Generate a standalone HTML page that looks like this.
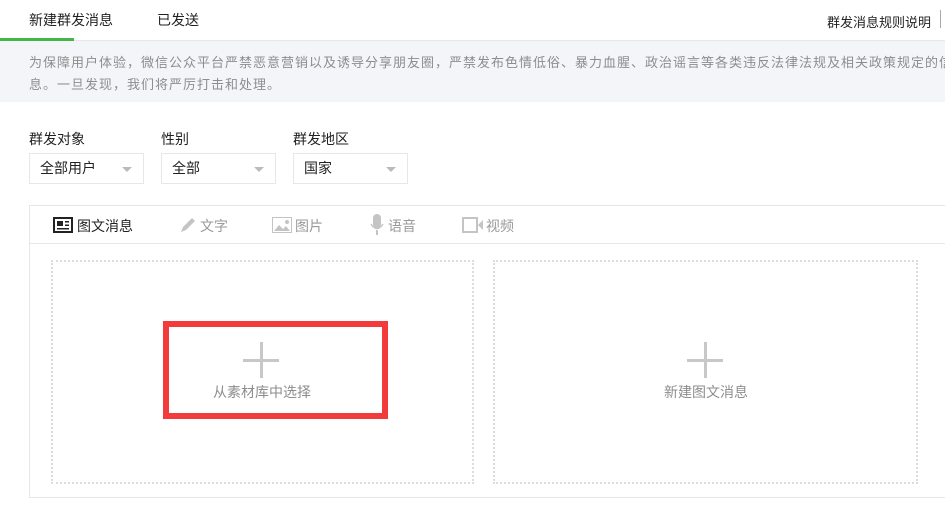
<!DOCTYPE html>
<html><head><meta charset="utf-8"><style>
body{margin:0;width:945px;height:518px;overflow:hidden;background:#fff;font-family:"Liberation Sans","Noto Sans CJK SC",sans-serif;font-size:14px;color:#353535;position:relative}
.a{position:absolute;white-space:nowrap}
.sel{position:absolute;top:153px;height:31px;border:1px solid #e4e8eb;box-sizing:border-box;width:115px;line-height:29px;padding-left:10px;font-size:14px;color:#222}
.sel:after{content:"";position:absolute;right:11px;top:13px;border:5px solid transparent;border-top:5px solid #bbb}
.card{position:absolute;top:260px;height:224px;border:2px dotted #dcdcde;box-sizing:border-box}
.plus{position:absolute;width:36px;height:36px}
.plus:before{content:"";position:absolute;left:0;top:17px;width:36px;height:3px;background:#c8c8c8}
.plus:after{content:"";position:absolute;left:17px;top:0;width:3px;height:36px;background:#c8c8c8}
.t{position:absolute;top:216px;font-size:14px;color:#9a9a9a}
</style></head><body>
<div class="a" style="left:29px;top:10px;font-size:14px;color:#222">新建群发消息</div>
<div class="a" style="left:157px;top:10px;font-size:14px;color:#222">已发送</div>
<div class="a" style="left:827px;top:12px;font-size:13px;color:#222">群发消息规则说明</div>
<div class="a" style="left:940px;top:10px;width:1px;height:18px;background:#aaa"></div>
<div class="a" style="left:0;top:40px;width:945px;height:1px;background:#e7e7eb"></div>
<div class="a" style="left:0;top:38px;width:74px;height:3px;background:#44b549"></div>
<div class="a" style="left:0;top:41px;width:945px;height:61px;background:#f4f5f9"></div>
<div class="a" style="left:29px;top:52px;font-size:13px;color:#8d8d8d;line-height:22px;letter-spacing:1px">为保障用户体验，微信公众平台严禁恶意营销以及诱导分享朋友圈，严禁发布色情低俗、暴力血腥、政治谣言等各类违反法律法规及相关政策规定的信</div>
<div class="a" style="left:29px;top:74px;font-size:13px;color:#8d8d8d;line-height:22px;letter-spacing:1px">息。一旦发现，我们将严厉打击和处理。</div>
<div class="a" style="left:29px;top:129px;font-size:14px;color:#222">群发对象</div>
<div class="a" style="left:161px;top:129px;font-size:14px;color:#222">性别</div>
<div class="a" style="left:293px;top:129px;font-size:14px;color:#222">群发地区</div>
<div class="sel" style="left:29px">全部用户</div>
<div class="sel" style="left:161px">全部</div>
<div class="sel" style="left:293px">国家</div>
<div class="a" style="left:29px;top:205px;width:930px;height:293px;border:1px solid #e7e7eb;box-sizing:border-box"></div>
<div class="a" style="left:30px;top:243px;width:915px;height:1px;background:#e7e7eb"></div>
<svg class="a" style="left:53px;top:217px" width="20" height="16"><rect x="1" y="1" width="18" height="14" fill="none" stroke="#222" stroke-width="2"/><rect x="4" y="4" width="6" height="5" fill="#222"/><rect x="12" y="4" width="4" height="1.5" fill="#222"/><rect x="12" y="7.5" width="4" height="1.5" fill="#222"/><rect x="4" y="11" width="12" height="1.5" fill="#222"/></svg>
<div class="a" style="left:77px;top:216px;color:#222">图文消息</div>
<svg class="a" style="left:179px;top:216px" width="18" height="18"><path d="M2 16 L4 11 L13 2 L16 5 L7 14 Z" fill="#c4c4c4"/></svg>
<div class="t" style="left:200px">文字</div>
<svg class="a" style="left:272px;top:217px" width="20" height="16"><rect x="0.5" y="0.5" width="19" height="15" fill="none" stroke="#c4c4c4"/><path d="M2 14 L7 8 L11 12 L14 9 L18 14 Z" fill="#c4c4c4"/><circle cx="15" cy="5" r="2" fill="#c4c4c4"/></svg>
<div class="t" style="left:295px">图片</div>
<svg class="a" style="left:370px;top:214px" width="14" height="22"><rect x="3" y="0" width="8" height="14" rx="4" fill="#c4c4c4"/><path d="M1 10 Q7 19 13 10" fill="none" stroke="#c4c4c4" stroke-width="1.5"/><rect x="6" y="16" width="2" height="5" fill="#c4c4c4"/></svg>
<div class="t" style="left:388px">语音</div>
<svg class="a" style="left:462px;top:217px" width="22" height="16"><rect x="1" y="1" width="14" height="14" fill="none" stroke="#c4c4c4" stroke-width="2"/><path d="M16 8 L21 3 L21 13 Z" fill="#c4c4c4"/></svg>
<div class="t" style="left:486px">视频</div>
<div class="card" style="left:51px;width:423px"></div>
<div class="card" style="left:493px;width:425px"></div>
<div class="a" style="left:163px;top:321px;width:225px;height:98px;border:6px solid #f33b3b;box-sizing:border-box"></div>
<div class="plus" style="left:243px;top:342px"></div>
<div class="a" style="left:213px;top:382px;font-size:14px;color:#8d8d8d">从素材库中选择</div>
<div class="plus" style="left:687px;top:342px"></div>
<div class="a" style="left:664px;top:382px;font-size:14px;color:#8d8d8d">新建图文消息</div>
</body></html>
